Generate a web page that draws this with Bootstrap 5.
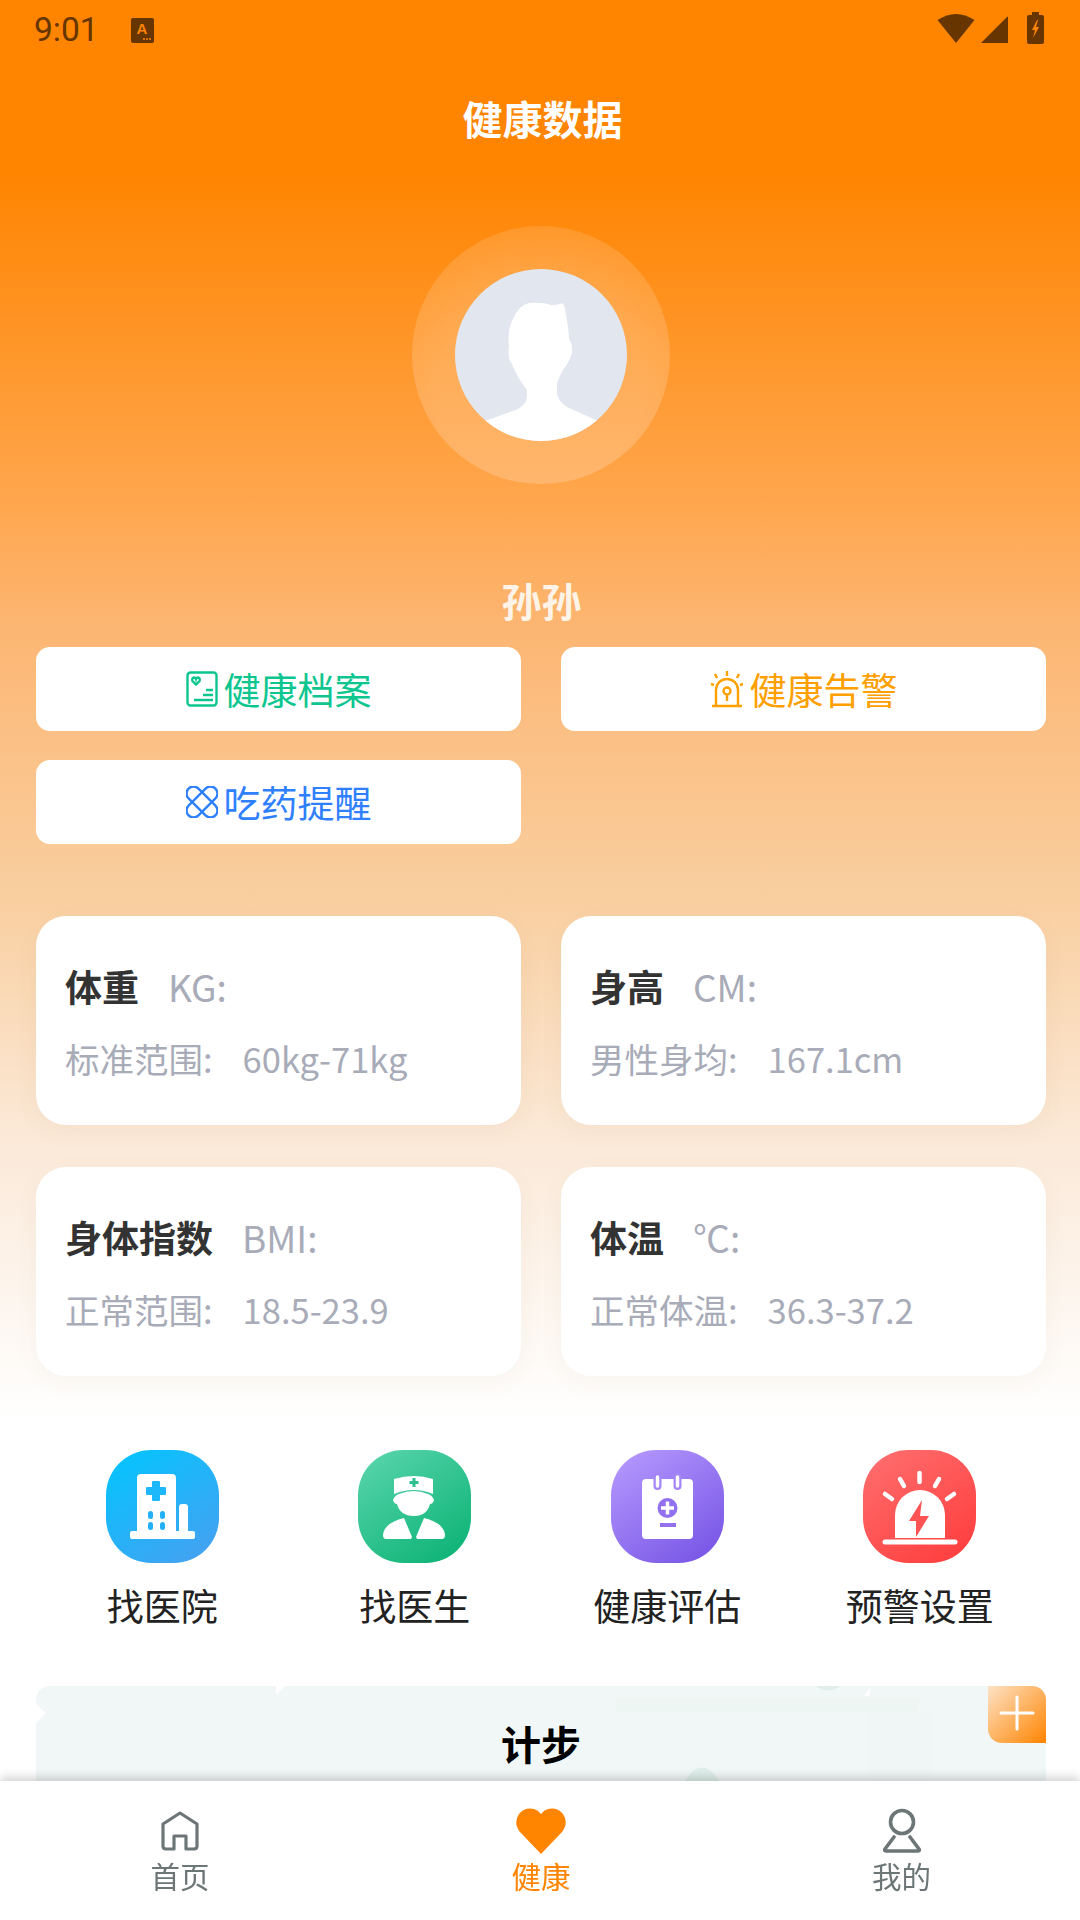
<!DOCTYPE html>
<html lang="zh-CN">
<head>
  <meta charset="UTF-8">
  <title>健康数据</title>
  <meta name="viewport" content="width=device-width, initial-scale=1">
  <link href="https://cdn.jsdelivr.net/npm/bootstrap@5.3.0/dist/css/bootstrap.min.css" rel="stylesheet">
  <style>
    body { background: #fff; font-family: "Noto Sans CJK SC", "Noto Sans", sans-serif; height: 1920px; overflow: hidden; }
    .health-page { height: 1920px; background: linear-gradient(180deg, #ff8400 0, #ff8400 170px, #ffa64d 500px, #fcb673 630px, #f9cfa0 900px, #fbe9d8 1140px, #fff 1420px); }
    .status-strip { height: 60px; padding: 0 36px 0 34px; color: #663500; }
    .status-time { font-family: Roboto, sans-serif; font-size: 33.500px; width: 97px; }
    .status-icons { padding-bottom: 4px; }
    .gap-signal { margin-left: 6px; }
    .gap-battery { margin-left: 19px; }
    .page-title { height: 60px; margin-top: 28px; padding-left: 5px; font-size: 40px; line-height: 60px; font-weight: 700; color: #fff; }
    .avatar-ring { width: 258px; height: 258px; margin: 78px 0 0 412px; background: radial-gradient(circle at 50% 62%, rgba(255,255,255,.2) 50%, rgba(255,255,255,.06) 100%); }
    .avatar-face { width: 172px; height: 172px; background: #e1e6ef; overflow: hidden; }
    .user-name { height: 50px; margin-top: 91px; padding-left: 3px; font-size: 40px; line-height: 50px; font-weight: 700; color: #fdf3e7; }
    .side-pad { padding-left: 36px; padding-right: 34px; }
    .action-grid { --bs-gutter-x: 40px; --bs-gutter-y: 29px; margin-top: -7px; }
    .action-btn { height: 84px; width: 100%; gap: 6px; padding: 0; background: #fff; border: 0; border-radius: 14px; font-size: 37px; line-height: 1; }
    .action-btn:hover { background: #fff; }
    .tone-green { color: #0dc68f; }
    .tone-orange { color: #ffa000; }
    .tone-blue { color: #2f80ff; }
    .tone-green:hover { color: #0dc68f; }
    .tone-orange:hover { color: #ffa000; }
    .tone-blue:hover { color: #2f80ff; }
    .stat-grid { --bs-gutter-x: 40px; --bs-gutter-y: 42px; margin-top: 30px; }
    .stat-card { height: 209px; padding: 42px 29px 0; border: 0; border-radius: 30px; box-shadow: 0 6px 24px rgba(120, 90, 60, .05); }
    .stat-top { height: 56px; line-height: 56px; font-size: 37px; color: #a8abb8; }
    .stat-top b { color: #333; margin-right: 29px; }
    .stat-sub { margin-top: 16px; height: 56px; line-height: 56px; font-size: 34.500px; color: #a8abb8; }
    .stat-sub span { margin-left: 30px; }
    .shortcut-grid { margin-top: 74px; }
    .shortcut-tile { width: 113px; height: 113px; border-radius: 40%; }
    .tile-blue { background: linear-gradient(145deg, #00c6ff, #4a9ef0); }
    .tile-green { background: linear-gradient(145deg, #5bd6ae, #07b072); }
    .tile-purple { background: linear-gradient(145deg, #b89cff, #7350e4); }
    .tile-red { background: linear-gradient(145deg, #ff7070, #ff3a3a); }
    .shortcut-label { height: 50px; margin-top: 17px; font-size: 37px; line-height: 50px; color: #222; }
    .steps-wrap { margin-top: 56px; }
    .steps-panel { height: 240px; background: #f0f7f6; border-radius: 14px 14px 0 0; }
    .steps-art { top: 0; left: 0; }
    .steps-title { padding-top: 32px; font-size: 40px; line-height: 50px; font-weight: 700; color: #000; }
    .steps-add { top: 0; right: 0; width: 58px; height: 57px; background: linear-gradient(135deg, #fde2c6, #ff8400); border: 0; border-radius: 0 14px 0 14px; padding: 0 0 3px; }
    .tabbar-box { height: 139px; padding: 0; background: #fff; box-shadow: 0 -3px 10px rgba(0, 0, 0, .2); }
    .tab-item { width: 360px; height: 139px; padding-top: 25px; font-size: 29.500px; line-height: 40px; color: #6d7677; text-decoration: none; }
    .tab-item.current { color: #ff8400; padding-left: 2px; }
    .tab-item.last-tab { padding-left: 3px; }
    .tab-glyph { height: 49px; }
  </style>
</head>
<body>
  <div class="health-page">

    <!-- status bar -->
    <div class="status-strip d-flex align-items-center">
      <span class="status-time">9:01</span>
      <svg width="23" height="25" viewBox="0 0 23 25">
        <rect width="23" height="25" rx="2" fill="#663500"/>
        <text x="11" y="16" text-anchor="middle" font-family="Liberation Sans" font-size="15" font-weight="700" fill="#ff8400">A</text>
        <circle cx="13" cy="21" r="1" fill="#ff8400"/><circle cx="16" cy="21" r="1" fill="#ff8400"/><circle cx="19" cy="21" r="1" fill="#ff8400"/>
      </svg>
      <div class="status-icons ms-auto d-flex">
        <svg width="38" height="32" viewBox="0 0 38 32"><path d="M.5 8Q19-4 37.500 8L19 31Z" fill="#663500"/></svg>
        <svg class="gap-signal" width="27" height="32" viewBox="0 0 27 32"><path d="M0 31 26 5q1-1 1 0V31Z" fill="#663500"/></svg>
        <svg class="gap-battery" width="17" height="32" viewBox="0 0 17 32">
          <path d="M5 0h7v3h3q2 0 2 2v25q0 2-2 2H2q-2 0-2-2V5q0-2 2-2h3Z" fill="#663500"/>
          <path d="M10 8 5 18h3l-2 8 6-11H9l2-7Z" fill="#ff8400"/>
        </svg>
      </div>
    </div>

    <div class="page-title text-center">健康数据</div>

    <!-- avatar -->
    <div class="avatar-ring rounded-circle d-flex align-items-center justify-content-center">
      <div class="avatar-face rounded-circle">
        <svg class="d-block" width="172" height="172" viewBox="0 0 172 172">
          <path d="M30 152 58 142Q72 137 72 127V121Q62 108 57 95 52 88 54 78 52 60 58 50 64 36 74 34 88 33 96 36 104 36 107 34 110 36 111 46 114 62 114 70 118 76 117 84 114 94 108 101 102 112 102 116V125Q104 133 112 138L143 152V172H30Z" fill="#fff"/>
        </svg>
      </div>
    </div>

    <div class="user-name text-center">孙孙</div>

    <!-- action buttons -->
    <div class="side-pad">
      <div class="row action-grid">
        <div class="col-6">
          <button class="btn action-btn tone-green d-flex align-items-center justify-content-center">
            <svg width="32" height="36" viewBox="0 0 32 36" fill="none" stroke="#0dc68f" stroke-width="2.400">
              <rect x="1.500" y="1.500" width="29" height="33" rx="3"/>
              <path d="M10 13.500 6.500 10Q5.500 7 8 6.500 9.500 6.500 10 8 10.500 6.500 12 6.500 14.500 7 13.500 10Z"/>
              <path d="M20 19h7M17 24h10M8 29h19"/>
            </svg>
            健康档案
          </button>
        </div>
        <div class="col-6">
          <button class="btn action-btn tone-orange d-flex align-items-center justify-content-center">
            <svg width="34" height="38" viewBox="0 0 34 38" fill="none" stroke="#ffa000" stroke-width="2.400">
              <path d="M6 36V20a11 11 0 0 1 22 0V36M2 36h30"/>
              <circle cx="17" cy="21" r="3.500"/>
              <path d="M17 25v6M17 1v5M5 4l2 4M29 4l-2 4M1 14l3 1M33 14l-3 1"/>
            </svg>
            健康告警
          </button>
        </div>
        <div class="col-6">
          <button class="btn action-btn tone-blue d-flex align-items-center justify-content-center">
            <svg width="32" height="32" viewBox="0 0 32 32" fill="none" stroke="#2f80ff" stroke-width="2.400">
              <rect x="-3" y="9" width="38" height="14" rx="7" transform="rotate(45 16 16)"/>
              <rect x="-3" y="9" width="38" height="14" rx="7" transform="rotate(-45 16 16)"/>
            </svg>
            吃药提醒
          </button>
        </div>
      </div>

      <!-- data cards -->
      <div class="row stat-grid">
        <div class="col-6">
          <div class="card stat-card">
            <div class="stat-top"><b>体重</b>KG:</div>
            <div class="stat-sub">标准范围:<span>60kg-71kg</span></div>
          </div>
        </div>
        <div class="col-6">
          <div class="card stat-card">
            <div class="stat-top"><b>身高</b>CM:</div>
            <div class="stat-sub">男性身均:<span>167.1cm</span></div>
          </div>
        </div>
        <div class="col-6">
          <div class="card stat-card">
            <div class="stat-top"><b>身体指数</b>BMI:</div>
            <div class="stat-sub">正常范围:<span>18.5-23.9</span></div>
          </div>
        </div>
        <div class="col-6">
          <div class="card stat-card">
            <div class="stat-top"><b>体温</b>℃:</div>
            <div class="stat-sub">正常体温:<span>36.3-37.2</span></div>
          </div>
        </div>
      </div>

      <!-- shortcuts -->
      <div class="row g-0 shortcut-grid text-center">
        <div class="col-3">
          <div class="shortcut-tile tile-blue mx-auto">
            <svg class="d-block" width="113" height="113" viewBox="0 0 113 113">
              <path d="M35 24H66q4 0 4 4V81H31V28q0-4 4-4ZM73 57q0-3 3-3h3q3 0 3 3V81H73ZM26 81H87q2 0 2 2v4q0 2-2 2H26q-2 0-2-2v-4q0-2 2-2Z" fill="#fff"/>
              <path d="M47 31h6q1 0 1 1v5h5q1 0 1 1v6q0 1-1 1h-5v5q0 1-1 1h-6q-1 0-1-1v-5h-5q-1 0-1-1v-6q0-1 1-1h5v-5q0-1 1-1Z" fill="#1cb8fb"/>
              <g fill="#24b0f8"><rect x="42" y="61" width="5" height="8" rx="2.500"/><rect x="54" y="61" width="5" height="8" rx="2.500"/><rect x="42" y="72" width="5" height="8" rx="2.500"/><rect x="54" y="72" width="5" height="8" rx="2.500"/></g>
            </svg>
          </div>
          <div class="shortcut-label">找医院</div>
        </div>
        <div class="col-3">
          <div class="shortcut-tile tile-green mx-auto">
            <svg class="d-block" width="113" height="113" viewBox="0 0 113 113">
              <path d="M36 29Q56 23 75 29V44Q56 36 36 44Z" fill="#fff"/>
              <path d="M54.500 28h3v3h3v3h-3v3h-3v-3h-3v-3h3Z" fill="#2fc090"/>
              <path d="M41 44Q56 38 70 44 74 45 76 50 75 54 72 54 69 66 56 66 42 66 39 54 36 54 35 50 37 45 41 44Z" fill="#fff"/>
              <path d="M25 85Q26 73 46 68L54 87 53 89H28Q25 89 25 85ZM87 85Q86 73 66 68L58 87 59 89H84Q87 89 87 85Z" fill="#fff"/>
            </svg>
          </div>
          <div class="shortcut-label">找医生</div>
        </div>
        <div class="col-3">
          <div class="shortcut-tile tile-purple mx-auto">
            <svg class="d-block" width="113" height="113" viewBox="0 0 113 113">
              <rect x="31" y="29" width="51" height="60" rx="4" fill="#fff"/>
              <path d="M46.500 27v9M66.500 27v9" stroke="#a385f5" stroke-width="8" stroke-linecap="round"/>
              <path d="M46.500 27v9M66.500 27v9" stroke="#fff" stroke-width="3.500" stroke-linecap="round"/>
              <circle cx="56.500" cy="58" r="10" fill="#9270ee"/>
              <path d="M50 58h13M56.500 51.500v13" stroke="#fff" stroke-width="3.500"/>
              <path d="M49 75h16" stroke="#9270ee" stroke-width="4"/>
            </svg>
          </div>
          <div class="shortcut-label">健康评估</div>
        </div>
        <div class="col-3">
          <div class="shortcut-tile tile-red mx-auto">
            <svg class="d-block" width="113" height="113" viewBox="0 0 113 113">
              <path d="M32 88V65a25 25 0 0 1 50 0V88Z" fill="#fff"/>
              <path d="M22 92H92" stroke="#fff" stroke-width="5" stroke-linecap="round"/>
              <path d="M56.500 23v9M37 29l4 7M76 29l-4 7M22 44l7 5M91 44l-7 5" stroke="#fff" stroke-width="4.500" stroke-linecap="round"/>
              <path d="M59 50 46 71h7L53 87 66 66H57Z" fill="#ff5354"/>
            </svg>
          </div>
          <div class="shortcut-label">预警设置</div>
        </div>
      </div>

      <!-- step counter, runs under the tab bar -->
      <div class="steps-wrap">
        <div class="steps-panel position-relative text-center">
          <svg class="steps-art position-absolute" width="1010" height="100" viewBox="0 0 1010 100">
            <rect x="833" y="26" width="62" height="74" fill="#eff6f5"/>
            <rect x="580" y="12" width="303" height="14" fill="#eef6f4"/>
            <path d="M0 18 10 27 0 37Z" fill="#fff"/>
            <path d="M240 0H249L240 9Z" fill="#fff"/>
            <path d="M828 10 834 2V10Z" fill="#fff"/>
            <path d="M780 0H804Q792 9 780 0Z" fill="#e0efeb"/>
            <path d="M649 95Q666 68 683 95Z" fill="#e0efeb"/>
          </svg>
          <div class="steps-title position-relative">计步</div>
          <button class="steps-add btn position-absolute d-flex align-items-center justify-content-center">
            <svg width="36" height="36" viewBox="0 0 36 36"><path d="M2 18H34M18 2V34" stroke="#fff" stroke-width="3" stroke-linecap="round"/></svg>
          </button>
        </div>
      </div>
    </div>
  </div>

  <!-- bottom tabs -->
  <nav class="navbar fixed-bottom tabbar-box">
    <div class="d-flex w-100">
      <a class="tab-item d-flex flex-column align-items-center" href="#">
        <span class="tab-glyph">
          <svg width="38" height="40" viewBox="0 0 38 40" fill="none" stroke="#6d7677" stroke-width="3.200" stroke-linejoin="round"><path d="M19 2 36 13V35Q36 38 33 38H25V25H13V38H5Q2 38 2 35V13Z"/></svg>
        </span>
        首页
      </a>
      <a class="tab-item current d-flex flex-column align-items-center" href="#">
        <span class="tab-glyph">
          <svg width="50" height="46" viewBox="0 0 50 46"><path d="M25 46 4 24Q-3 15 3 6 9-1 18 1 22 2 25 6 28 2 32 1 41-1 47 6 53 15 46 24Z" fill="#ff8400"/></svg>
        </span>
        健康
      </a>
      <a class="tab-item last-tab d-flex flex-column align-items-center" href="#">
        <span class="tab-glyph">
          <svg width="38" height="46" viewBox="0 0 38 46" fill="none" stroke="#6d7677" stroke-width="3.600" stroke-linecap="round" stroke-linejoin="round">
            <circle cx="19" cy="14" r="11.500"/>
            <path d="M11 29 2 41Q1 43 3 43H35Q37 43 36 41L27 29"/>
          </svg>
        </span>
        我的
      </a>
    </div>
  </nav>

  <script src="https://cdn.jsdelivr.net/npm/bootstrap@5.3.0/dist/js/bootstrap.bundle.min.js"></script>
</body>
</html>
